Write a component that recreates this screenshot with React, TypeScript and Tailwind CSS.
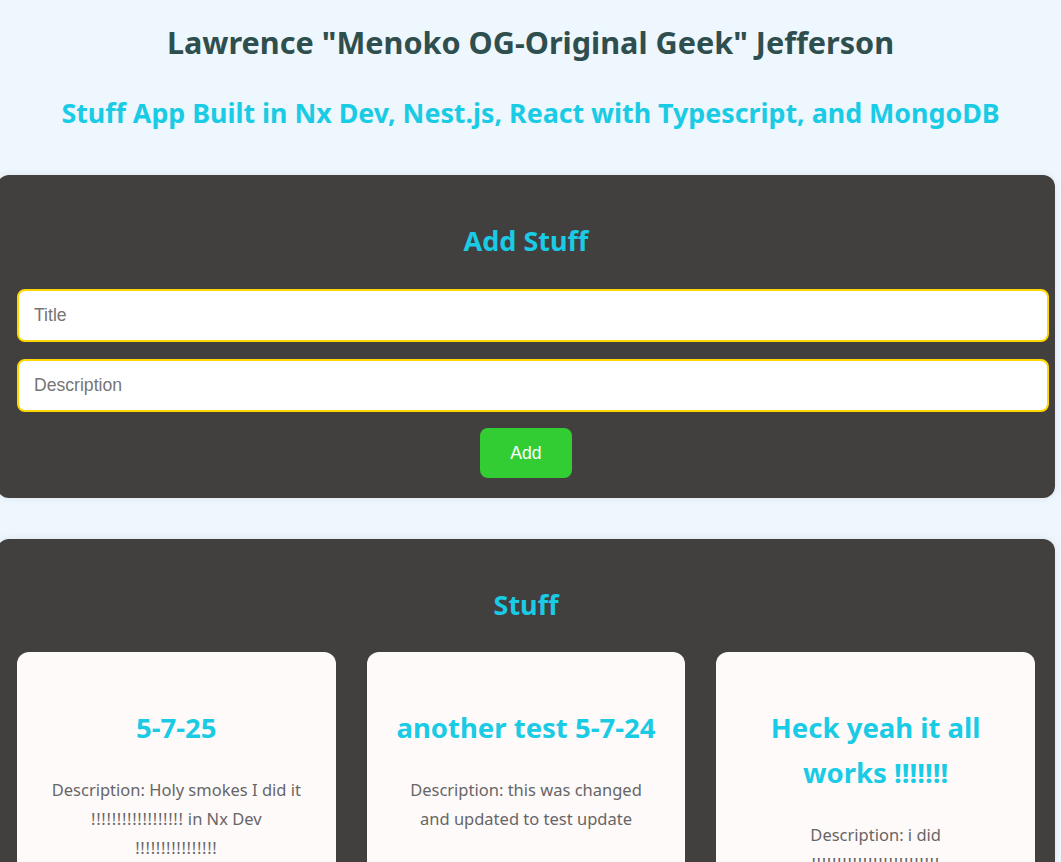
import React from 'react';

type Stuff = {
    title: string;
    description: string;
};

const stuffList: Stuff[] = [
    { title: '5-7-25', description: 'Holy smokes I did it !!!!!!!!!!!!!!!!!! in Nx Dev !!!!!!!!!!!!!!!!' },
    { title: 'another test 5-7-24', description: 'this was changed and updated to test update' },
    { title: 'Heck yeah it all works !!!!!!!', description: 'i did !!!!!!!!!!!!!!!!!!!!!!!!!' },
];

const heading = "font-['Segoe_UI','Noto_Sans',sans-serif]";

// runs of "!" are a touch wider in the original font, so give them some tracking
const Bangs: React.FC<{ text: string }> = ({ text }) => (
    <>
        {text.split(/(!{2,})/).map((part, i) =>
            /^!{2,}$/.test(part) ? (
                <span key={i} className="tracking-[0.7px]">{part}</span>
            ) : (
                <React.Fragment key={i}>{part}</React.Fragment>
            )
        )}
    </>
);

const StuffCard: React.FC<Stuff> = ({ title, description }) => (
    <div className="bg-[#fffafa] rounded-[12px] px-[22px] pt-[53px] pb-8 text-center">
        <h3 className={`${heading} text-[27.5px] leading-[45px] font-bold text-[#19cbe4]`}>{title}</h3>
        <p className={`${heading} mx-auto w-[250px] mt-[25px] text-[16.5px] leading-[29px] text-[#666]`}>
            Description: <Bangs text={description} />
        </p>
    </div>
);

const App: React.FC = () => {
    const [title, setTitle] = React.useState('');
    const [description, setDescription] = React.useState('');

    return (
        <div className="min-h-[862px] bg-[#eef6fe] overflow-hidden pt-[22px]">
            <h1 className={`${heading} text-center text-[30.6px] leading-[40px] font-bold text-[#2f4f4f]`}>
                Lawrence "Menoko OG-Original Geek" Jefferson
            </h1>
            <h2 className={`${heading} mt-[34px] text-center text-[26.8px] leading-[34px] font-bold text-[#19cbe4]`}>
                Stuff App Built in Nx Dev, Nest.js, React with Typescript, and MongoDB
            </h2>

            <section className="mt-[45px] ml-[-3px] w-[1058px] bg-[#42403e] rounded-[12px] px-[20px] pt-[49px] pb-[20px] shadow-[0_0_8px_rgba(0,0,0,0.08)]">
                <h2 className={`${heading} text-center text-[27px] leading-[34px] font-bold text-[#19cbe4]`}>Add Stuff</h2>
                <div className="mt-[31px] flex flex-col gap-[17px] w-[calc(100%+14px)]">
                    <input
                        value={title}
                        onChange={e => setTitle(e.target.value)}
                        placeholder="Title"
                        className="h-[53px] w-full bg-white border-2 border-[#ffd700] rounded-[8px] px-[15px] text-[17.6px] font-['Liberation_Sans',Arial,sans-serif] text-[#333] placeholder:text-[#757575] outline-none"
                    />
                    <input
                        value={description}
                        onChange={e => setDescription(e.target.value)}
                        placeholder="Description"
                        className="h-[53px] w-full bg-white border-2 border-[#ffd700] rounded-[8px] px-[15px] text-[17.6px] font-['Liberation_Sans',Arial,sans-serif] text-[#333] placeholder:text-[#757575] outline-none"
                    />
                </div>
                <div className="mt-[16px] flex justify-center">
                    <button className="w-[92px] h-[50px] bg-[#32cd32] rounded-[8px] text-white text-[17.6px] font-['Liberation_Sans',Arial,sans-serif]">
                        Add
                    </button>
                </div>
            </section>

            <section className="mt-[41px] ml-[-3px] w-[1058px] bg-[#42403e] rounded-[12px] px-[20px] pt-[49px] pb-[20px] shadow-[0_0_8px_rgba(0,0,0,0.08)]">
                <h2 className={`${heading} text-center text-[27px] leading-[34px] font-bold text-[#19cbe4]`}>Stuff</h2>
                <div className="mt-[30px] grid grid-cols-3 gap-[31px]">
                    {stuffList.map(item => (
                        <StuffCard key={item.title} {...item} />
                    ))}
                </div>
            </section>
        </div>
    );
};

export default App;
